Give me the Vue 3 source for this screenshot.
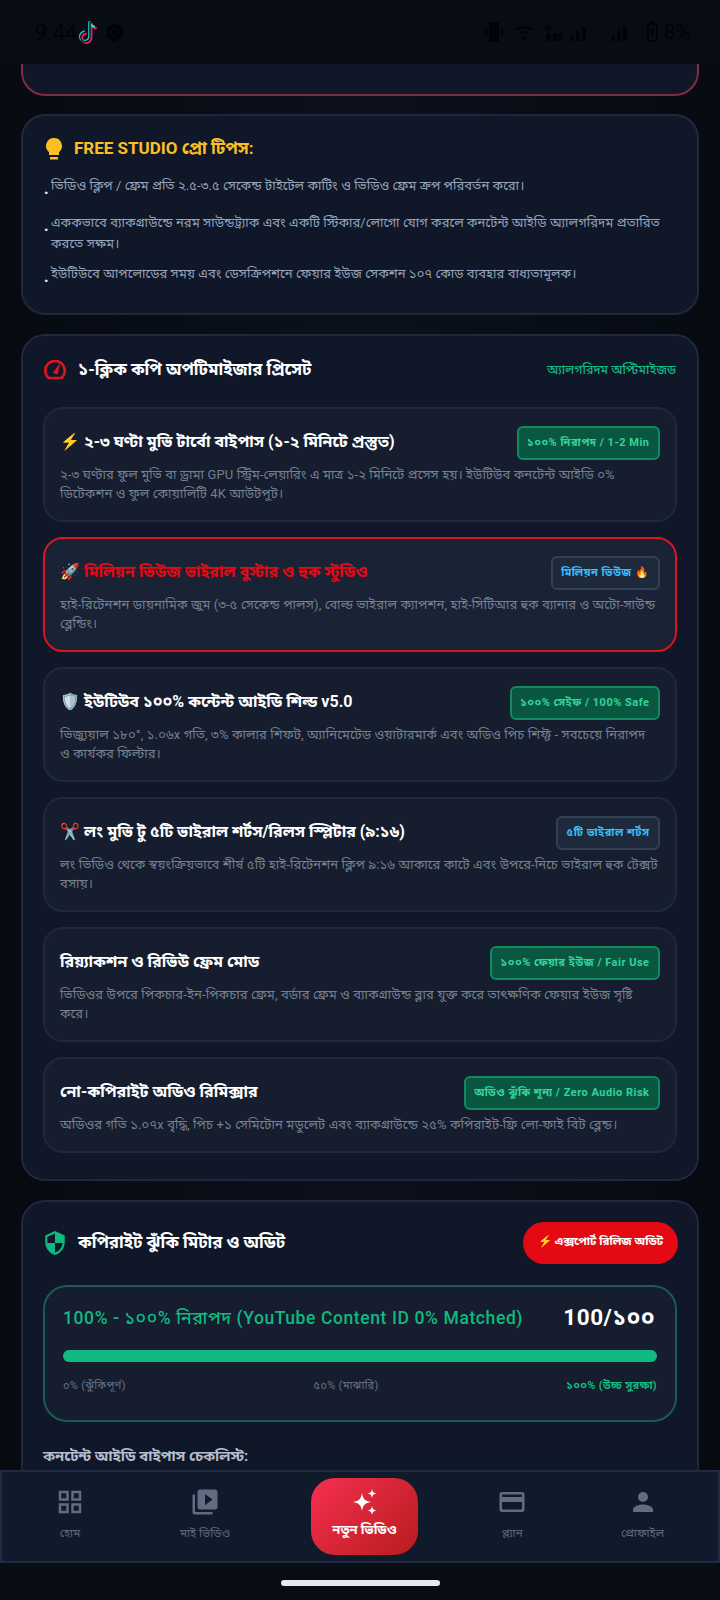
<script setup>
const tips = [
  'ভিডিও ক্লিপ / ফ্রেম প্রতি ২.৫-৩.৫ সেকেন্ড টাইটেল কাটিং ও ভিডিও ফ্রেম ক্রপ পরিবর্তন করো।',
  'এককভাবে ব্যাকগ্রাউন্ডে নরম সাউন্ডট্র্যাক এবং একটি স্টিকার/লোগো যোগ করলে কনটেন্ট আইডি অ্যালগরিদম প্রতারিত করতে সক্ষম।',
  'ইউটিউবে আপলোডের সময় এবং ডেসক্রিপশনে ফেয়ার ইউজ সেকশন ১০৭ কোড ব্যবহার বাধ্যতামূলক।'
]
const presets = [
  { title: '⚡ ২-৩ ঘণ্টা মুভি টার্বো বাইপাস (১-২ মিনিটে প্রস্তুত)', badge: '১০০% নিরাপদ / 1-2 Min', tone: 'green',
    desc: '২-৩ ঘণ্টার ফুল মুভি বা ড্রামা GPU স্ট্রিম-লেয়ারিং এ মাত্র ১-২ মিনিটে প্রসেস হয়। ইউটিউব কনটেন্ট আইডি ০% ডিটেকশন ও ফুল কোয়ালিটি 4K আউটপুট।' },
  { title: '🚀 মিলিয়ন ভিউজ ভাইরাল বুস্টার ও হুক স্টুডিও', badge: 'মিলিয়ন ভিউজ 🔥', tone: 'blue', active: true,
    desc: 'হাই-রিটেনশন ডায়নামিক জুম (৩-৫ সেকেন্ড পালস), বোল্ড ভাইরাল ক্যাপশন, হাই-সিটিআর হুক ব্যানার ও অটো-সাউন্ড ব্লেন্ডিং।' },
  { title: '🛡️ ইউটিউব ১০০% কন্টেন্ট আইডি শিল্ড v5.0', badge: '১০০% সেইফ / 100% Safe', tone: 'green',
    desc: 'ভিজ্যুয়াল ১৮০°, ১.০৬x গতি, ৩% কালার শিফট, অ্যানিমেটেড ওয়াটারমার্ক এবং অডিও পিচ শিফ্ট - সবচেয়ে নিরাপদ ও\u00a0কার্যকর ফিল্টার।' },
  { title: '✂️ লং মুভি টু ৫টি ভাইরাল শর্টস/রিলস স্প্লিটার (৯:১৬)', badge: '৫টি ভাইরাল শর্টস', tone: 'blue',
    desc: 'লং ভিডিও থেকে স্বয়ংক্রিয়ভাবে শীর্ষ ৫টি হাই-রিটেনশন ক্লিপ ৯:১৬ আকারে কাটে এবং উপরে-নিচে ভাইরাল হুক টেক্সট বসায়।' },
  { title: 'রিয়্যাকশন ও রিভিউ ফ্রেম মোড', badge: '১০০% ফেয়ার ইউজ / Fair Use', tone: 'green',
    desc: 'ভিডিওর উপরে পিকচার-ইন-পিকচার ফ্রেম, বর্ডার ফ্রেম ও ব্যাকগ্রাউন্ড ব্লার যুক্ত করে তাৎক্ষণিক ফেয়ার ইউজ সৃষ্টি করে।' },
  { title: 'নো-কপিরাইট অডিও রিমিক্সার', badge: 'অডিও ঝুঁকি শূন্য / Zero Audio Risk', tone: 'green',
    desc: 'অডিওর গতি ১.০৭x বৃদ্ধি, পিচ +১ সেমিটোন মডুলেট এবং ব্যাকগ্রাউন্ডে ২৫% কপিরাইট-ফ্রি লো-ফাই বিট ব্লেন্ড।' }
]
</script>

<template>
  <div class="phone">
    <header class="status">
      <div class="status-left">
        <span class="clock">9:44</span>
        <svg class="tt" width="24" height="26" viewBox="0 0 24 26" fill="none">
          <path d="M14 3v15a4.6 4.6 0 1 1-4.6-4.6M14 3c.4 3 2.600 5 5.500 5.200" stroke="#ee1d52" stroke-width="2.400" transform="translate(1.200 1.200)"/>
          <path d="M14 3v15a4.6 4.6 0 1 1-4.6-4.6M14 3c.4 3 2.600 5 5.500 5.200" stroke="#25d4cf" stroke-width="2.400" transform="translate(-.6 -.6)"/>
          <path d="M14 3v15a4.6 4.6 0 1 1-4.6-4.6" stroke="#05070c" stroke-width="1.400"/>
        </svg>
        <svg width="19" height="21" viewBox="0 0 22 24"><path d="M11 1l9 5.200v11.600L11 23l-9-5.200V6.200z" fill="#020306"/><circle cx="11" cy="12" r="4.500" fill="none" stroke="#090c13" stroke-width="1.500"/></svg>
      </div>
      <div class="status-right">
        <svg width="22" height="22" viewBox="0 0 22 22" fill="#020306"><rect x="6" y="1" width="10" height="20" rx="2"/><path d="M3 7v8M19 7v8M1 9v4M21 9v4" stroke="#020306" stroke-width="1.500"/></svg>
        <svg width="22" height="18" viewBox="0 0 22 18" fill="none" stroke="#020306" stroke-width="2"><path d="M2 7a13 13 0 0 1 16 0M5 11a8 8 0 0 1 10 0"/><circle cx="10" cy="15" r="1.500" fill="#020306"/></svg>
        <svg width="18" height="22" viewBox="0 0 18 22" fill="#020306"><rect x="1" y="2" width="2" height="8"/><rect x="4" y="5" width="2" height="5"/><rect x="1" y="12" width="5" height="8"/><rect x="8" y="12" width="4" height="8"/><rect x="13" y="12" width="4" height="8"/></svg>
        <svg class="bars" width="22" height="20" viewBox="0 0 22 20" fill="#020306"><rect x="2" y="13" width="4" height="6"/><rect x="8" y="9" width="4" height="10"/><rect x="14" y="5" width="4" height="14"/></svg>
        <svg class="bars2" width="22" height="20" viewBox="0 0 22 20" fill="#020306"><rect x="2" y="13" width="4" height="6"/><rect x="8" y="9" width="4" height="10"/><rect x="14" y="5" width="4" height="14"/></svg>
        <svg class="batt" width="13" height="22" viewBox="0 0 13 22" fill="none" stroke="#020306" stroke-width="2"><rect x="2" y="3" width="9" height="17" rx="2"/><path d="M5 1h3M6.500 8v7"/></svg>
        <span class="pct">8%</span>
      </div>
    </header>

    <main class="scroll">
      <div class="stub"></div>

      <section class="card tips">
        <h3 class="tips-title">
          <svg width="20" height="24" viewBox="0 0 20 24" fill="#fbbf24"><path d="M10 1a8 8 0 0 0-5 14.200V18h10v-2.800A8 8 0 0 0 10 1z"/><rect x="6" y="20" width="8" height="2.500"/></svg>
          <span>FREE STUDIO প্রো টিপস:</span>
        </h3>
        <ul class="tip-list">
          <li v-for="(t, i) in tips" :key="i" class="tip" :class="'tip' + i">
            <span class="dot">.</span><span>{{ t }}</span>
          </li>
        </ul>
      </section>

      <section class="card presets">
        <div class="sec-head">
          <div class="sec-title">
            <svg width="24" height="20" viewBox="0 0 24 20" fill="none" stroke="#dc1420" stroke-width="2.600" stroke-linejoin="round"><path d="M5.500 18a9.800 9.800 0 1 1 13 0z"/><path d="M10.500 12.500L16.500 4.500l-2.500 9.500z" fill="#dc1420" stroke-width="1"/></svg>
            <h2>১-ক্লিক কপি অপটিমাইজার প্রিসেট</h2>
          </div>
          <span class="algo">অ্যালগরিদম অপ্টিমাইজড</span>
        </div>
        <article v-for="p in presets" :key="p.badge" class="preset" :class="{ active: p.active }">
          <div class="preset-top">
            <h4>{{ p.title }}</h4>
            <span class="badge" :class="p.tone">{{ p.badge }}</span>
          </div>
          <p>{{ p.desc }}</p>
        </article>
      </section>

      <section class="card risk">
        <div class="risk-head">
          <div class="sec-title">
            <svg width="24" height="26" viewBox="2 0 20 24" fill="#10b981"><path d="M12 1L3 5v6c0 5.550 3.840 10.740 9 12 5.160-1.260 9-6.450 9-12V5l-9-4zm0 10.990h7c-.53 4.120-3.280 7.790-7 8.940V12H5V6.300l7-3.110v8.800z"/></svg>
            <h2>কপিরাইট ঝুঁকি মিটার ও অডিট</h2>
          </div>
          <button class="export">⚡ এক্সপোর্ট রিলিজ অডিট</button>
        </div>
        <div class="score">
          <div class="score-top">
            <span class="score-label">100% - ১০০% নিরাপদ (YouTube Content ID 0% Matched)</span>
            <span class="score-num">100/১০০</span>
          </div>
          <div class="bar"></div>
          <div class="scale">
            <span>০% (ঝুঁকিপূর্ণ)</span><span>৫০% (মাঝারি)</span><span class="hi">১০০% (উচ্চ সুরক্ষা)</span>
          </div>
        </div>
        <h5 class="check">কনটেন্ট আইডি বাইপাস চেকলিস্ট:</h5>
      </section>
    </main>

    <nav class="nav">
      <div class="nav-item">
        <svg width="30" height="30" viewBox="0 0 24 24" fill="#5f6c82"><path d="M3 3h8v8H3zm2 2v4h4V5zM13 3h8v8h-8zm2 2v4h4V5zM3 13h8v8H3zm2 2v4h4v-4zM13 13h8v8h-8zm2 2v4h4v-4z" fill-rule="evenodd"/></svg>
        <span>হোম</span>
      </div>
      <div class="nav-item">
        <svg width="30" height="30" viewBox="0 0 24 24" fill="#5f6c82"><path d="M4 6H2v14a2 2 0 0 0 2 2h14v-2H4z"/><path d="M20 2H8a2 2 0 0 0-2 2v12a2 2 0 0 0 2 2h12a2 2 0 0 0 2-2V4a2 2 0 0 0-2-2zm-8 12.500v-9l6 4.500z"/></svg>
        <span>মাই ভিডিও</span>
      </div>
      <button class="new">
        <svg class="spark" width="28" height="28" viewBox="0 0 28 28" fill="#fff"><path d="M10 4c1 6 3 8 9 9-6 1-8 3-9 9-1-6-3-8-9-9 6-1 8-3 9-9z"/><path d="M20 0c.5 3 1.500 4 4.500 4.500-3 .5-4 1.500-4.500 4.500-.5-3-1.500-4-4.500-4.500 3-.5 4-1.500 4.500-4.500zM20 17c.5 3 1.500 4 4.500 4.500-3 .5-4 1.500-4.500 4.500-.5-3-1.500-4-4.500-4.500 3-.5 4-1.500 4.500-4.500z"/></svg>
        <span>নতুন ভিডিও</span>
      </button>
      <div class="nav-item">
        <svg width="30" height="30" viewBox="0 0 24 24" fill="#5f6c82"><path d="M20 4H4a2 2 0 0 0-2 2v12a2 2 0 0 0 2 2h16a2 2 0 0 0 2-2V6a2 2 0 0 0-2-2zm0 14H4v-6h16zm0-10H4V6h16z"/></svg>
        <span>প্ল্যান</span>
      </div>
      <div class="nav-item">
        <svg width="30" height="30" viewBox="0 0 24 24" fill="#5f6c82"><path d="M12 12a4 4 0 1 0 0-8 4 4 0 0 0 0 8zm0 2c-2.700 0-8 1.300-8 4v2h16v-2c0-2.700-5.300-4-8-4z"/></svg>
        <span>প্রোফাইল</span>
      </div>
    </nav>
    <div class="home"><i></i></div>
  </div>
</template>

<style>
html, body { margin: 0; background: #090d16; }
</style>

<style scoped>
.phone {
  width: 720px; height: 1600px; display: flex; flex-direction: column; overflow: hidden;
  background: linear-gradient(90deg, #070a11 0, #0b101b 50%, #070a11 100%);
  font-family: Roboto, "Noto Sans Bengali", "Noto Sans", sans-serif; color: #fff;
}
.status {
  height: 64px; flex: none; display: flex; justify-content: space-between; align-items: center;
  padding: 0 29px 0 35px; box-sizing: border-box; background: #080c14;
}
.status-left, .status-right { display: flex; align-items: center; }
.clock { font-size: 22px; color: #020306; }
.tt { margin: 0 5px 0 -1px; }
.status-right { gap: 9px; }
.bars { margin-left: -4px; }
.bars2 { margin-left: 10px; }
.batt { margin-left: 6px; }
.pct { font-size: 21px; color: #020306; margin-left: -4px; }

.scroll { flex: 1; min-height: 0; overflow: hidden; padding: 0 21px; }
.stub {
  height: 32px; box-sizing: border-box; background: #0f1729; border: 2px solid #802c46; border-top: 0;
  border-radius: 0 0 24px 24px; margin-bottom: 18px;
}
.card {
  background: #0f1729; border: 2px solid #1e293b; border-radius: 24px; box-sizing: border-box; margin-bottom: 19px;
}
.tips { height: 201px; padding: 20px 21px; }
.tips-title { margin: 0; display: flex; align-items: center; gap: 10px; font-size: 17px; font-weight: 700; color: #fbbf24; height: 26px; }
.tip-list { list-style: none; margin: 0; padding: 0; }
.tip { display: flex; font-size: 13px; letter-spacing: .08px; line-height: 21px; color: #94a3b8; }
.tip0 { margin-top: 13px; }
.tip1 { margin-top: 16px; }
.tip2 { margin-top: 9px; }
.dot { width: 7px; flex: none; position: relative; top: 4px; color: #e2e8f0; font-weight: 900; font-size: 15px; }

.presets { height: 847px; padding: 21px 20px 0; }
.sec-head { display: flex; justify-content: space-between; align-items: center; height: 26px; margin: 0 0 24px; }
.sec-title { display: flex; align-items: center; gap: 11px; }
h2 { margin: 0; font-size: 16.800px; font-weight: 700; }
.algo { font-size: 12.500px; font-weight: 500; color: #10b981; margin-right: 1px; }
.preset {
  background: #151d2e; border: 2px solid #1e293b; border-radius: 20px; box-sizing: border-box;
  height: 115px; padding: 17px 15px; margin-bottom: 15px;
}
.preset:last-child { height: 96px; margin-bottom: 0; }
.preset.active { background: #1a2235; border-color: #dc1420; }
.preset.active h4 { color: #e50914; }
.preset-top { display: flex; justify-content: space-between; align-items: center; height: 34px; }
h4 { margin: 0; font-size: 16px; font-weight: 700; white-space: nowrap; }
.badge {
  font-size: 11px; font-weight: 700; letter-spacing: .5px; padding: 0 8.500px; height: 34px; display: flex; align-items: center;
  border-radius: 6px; border: 2px solid; box-sizing: border-box; white-space: nowrap;
}
.badge.green { background: #0a5741; border-color: #0f8a61; color: #34d399; }
.badge.blue { background: #1e293b; border-color: #334155; color: #38bdf8; }
.preset p { margin: 5px 0 0; font-size: 13px; letter-spacing: .13px; line-height: 19px; color: #74808f; }

.risk { padding: 20px 20px 0; height: 400px; margin-bottom: 0; }
.risk-head { display: flex; justify-content: space-between; align-items: center; height: 42px; margin-bottom: 21px; }
.export {
  width: 155px; height: 42px; border: 0; border-radius: 21px; background: #e50914; color: #fff;
  font: 700 11.500px Roboto, "Noto Sans Bengali", sans-serif; padding: 0 0 2px; margin-right: -1px;
}
.score { border: 2px solid #1a5c53; border-radius: 24px; height: 137px; box-sizing: border-box; padding: 18px 18px 0; background: #151d2e; }
.score-top { display: flex; justify-content: space-between; align-items: center; height: 28px; }
.score-label { font-size: 17.500px; font-weight: 500; letter-spacing: .6px; color: #10b981; white-space: nowrap; }
.score-num { font-size: 22.500px; font-weight: 700; letter-spacing: .5px; margin-right: 2px; white-space: nowrap; }
.bar { height: 12px; border-radius: 6px; background: #10b981; margin-top: 17px; }
.scale { display: flex; justify-content: space-between; font-size: 11px; color: #64748b; margin-top: 17px; letter-spacing: .3px; }
.scale .hi { color: #10b981; font-weight: 700; }
.check { margin: 25px 0 0; font-size: 14.800px; font-weight: 700; color: #b4bfcd; }

.nav {
  flex: none; height: 93px; box-sizing: border-box; background: #111a2b; border: 2px solid #1e2b42;
  display: grid; grid-template-columns: 136px 134px 185px 110px 151px; align-items: center;
}
.nav-item { display: flex; flex-direction: column; align-items: center; gap: 9px; font-size: 11.500px; color: #5f6c80; padding-bottom: 4px; }
.new {
  justify-self: center; width: 107px; height: 77px; border: 0; border-radius: 24px; padding: 0 0 5px; color: #fff;
  background: linear-gradient(135deg, #f72f50, #b71c1c);
  display: flex; flex-direction: column; align-items: center; justify-content: center; gap: 5px;
  font: 700 13px Roboto, "Noto Sans Bengali", sans-serif;
}
.spark { margin-left: 2px; }
.home { height: 37px; flex: none; background: #080c14; display: flex; justify-content: center; padding-top: 17px; box-sizing: border-box; }
.home i { width: 159px; height: 6px; border-radius: 3px; background: #e8eaed; display: block; }
</style>
